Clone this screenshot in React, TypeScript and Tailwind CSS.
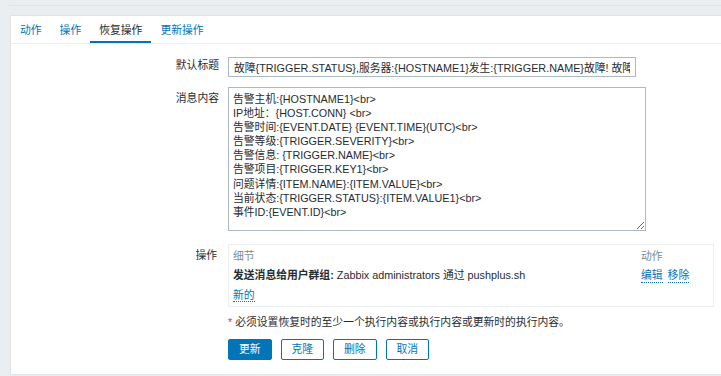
import React from "react";

const message = [
  "告警主机:{HOSTNAME1}<br>",
  "IP地址：{HOST.CONN} <br>",
  "告警时间:{EVENT.DATE} {EVENT.TIME}(UTC)<br>",
  "告警等级:{TRIGGER.SEVERITY}<br>",
  "告警信息: {TRIGGER.NAME}<br>",
  "告警项目:{TRIGGER.KEY1}<br>",
  "问题详情:{ITEM.NAME}:{ITEM.VALUE}<br>",
  "当前状态:{TRIGGER.STATUS}:{ITEM.VALUE1}<br>",
  "事件ID:{EVENT.ID}<br>",
].join("\n");

const tabs = ["动作", "操作", "恢复操作", "更新操作"];

const App = () => {
  return (
    <div className="min-h-[376px] bg-[#ebeef0] text-[10.8px] text-[#1f2c33] font-['Liberation_Sans','Noto_Sans_CJK_SC',sans-serif]">
      <div className="h-[6px] ml-[9px] border-b border-[#dfe4e7]" />
      <div className="mt-[9px] ml-[10px] bg-white border-l border-t border-b border-[#dfe4e7]">
        {/* tabs */}
        <div className="flex h-[28px] border-b border-[#ebeef0]">
          {tabs.map((t) => (
            <div
              key={t}
              className={
                t === "恢复操作"
                  ? "px-[9px] leading-[26px] pt-[1px] border-b-[2px] border-[#0275b8] text-[#1f2c33]"
                  : "px-[9px] leading-[26px] pt-[1px] text-[#0275b8]"
              }
            >
              {t}
            </div>
          ))}
        </div>

        <div className="pt-[13px] pb-[14px]">
          {/* default subject */}
          <div className="flex">
            <div className="w-[208px] text-right leading-[14px] pt-[1px]">默认标题</div>
            <input
              readOnly
              value="故障{TRIGGER.STATUS},服务器:{HOSTNAME1}发生:{TRIGGER.NAME}故障! 故障"
              className="ml-[9px] w-[408px] h-[20px] px-[5px] border border-[#acbbc2] outline-none text-[#1f2c33] leading-[18px]"
            />
          </div>

          {/* message */}
          <div className="flex mt-[10px]">
            <div className="w-[208px] text-right leading-[14px] pt-[4px]">消息内容</div>
            <textarea
              readOnly
              defaultValue={message}
              className="ml-[9px] w-[418px] h-[144px] px-[4px] pt-[4px] border border-[#acbbc2] outline-none leading-[14.1px] text-[#1f2c33]"
            />
          </div>

          {/* operations */}
          <div className="flex mt-[13px]">
            <div className="w-[206px] text-right leading-[14px] pt-[4px]">操作</div>
            <div className="ml-[11px] w-[486px] border border-[#ebeef0] px-[4px] pt-[4px] pb-[4px] leading-[14px]">
              <div className="flex">
                <div className="flex-1 text-[#768d99]">细节</div>
                <div className="w-[68px] text-[#768d99]">动作</div>
              </div>
              <div className="flex mt-[5px]">
                <div className="flex-1">
                  <span className="font-bold">发送消息给用户群组:</span> Zabbix administrators 通过 pushplus.sh
                </div>
                <div className="w-[68px] flex gap-[5px] text-[#0275b8]">
                  <span className="border-b border-dotted border-[#0275b8]">编辑</span>
                  <span className="border-b border-dotted border-[#0275b8]">移除</span>
                </div>
              </div>
              <div className="mt-[5px]">
                <span className="text-[#0275b8] border-b border-dotted border-[#0275b8]">新的</span>
              </div>
            </div>
          </div>

          {/* note */}
          <div className="ml-[217px] mt-[8px] leading-[14px]">
            <span className="text-[#e33734]">*</span> 必须设置恢复时的至少一个执行内容或执行内容或更新时的执行内容。
          </div>

          {/* buttons */}
          <div className="ml-[217px] mt-[10px] flex gap-[9px]">
            <button className="w-[43.5px] h-[21px] rounded-[2px] bg-[#0275b8] border border-[#0275b8] text-white">
              更新
            </button>
            <button className="w-[43.5px] h-[21px] rounded-[2px] bg-white border border-[#0275b8] text-[#0275b8]">
              克隆
            </button>
            <button className="w-[43.5px] h-[21px] rounded-[2px] bg-white border border-[#0275b8] text-[#0275b8]">
              删除
            </button>
            <button className="w-[43.5px] h-[21px] rounded-[2px] bg-white border border-[#0275b8] text-[#0275b8]">
              取消
            </button>
          </div>
        </div>
      </div>
    </div>
  );
};

export default App;
